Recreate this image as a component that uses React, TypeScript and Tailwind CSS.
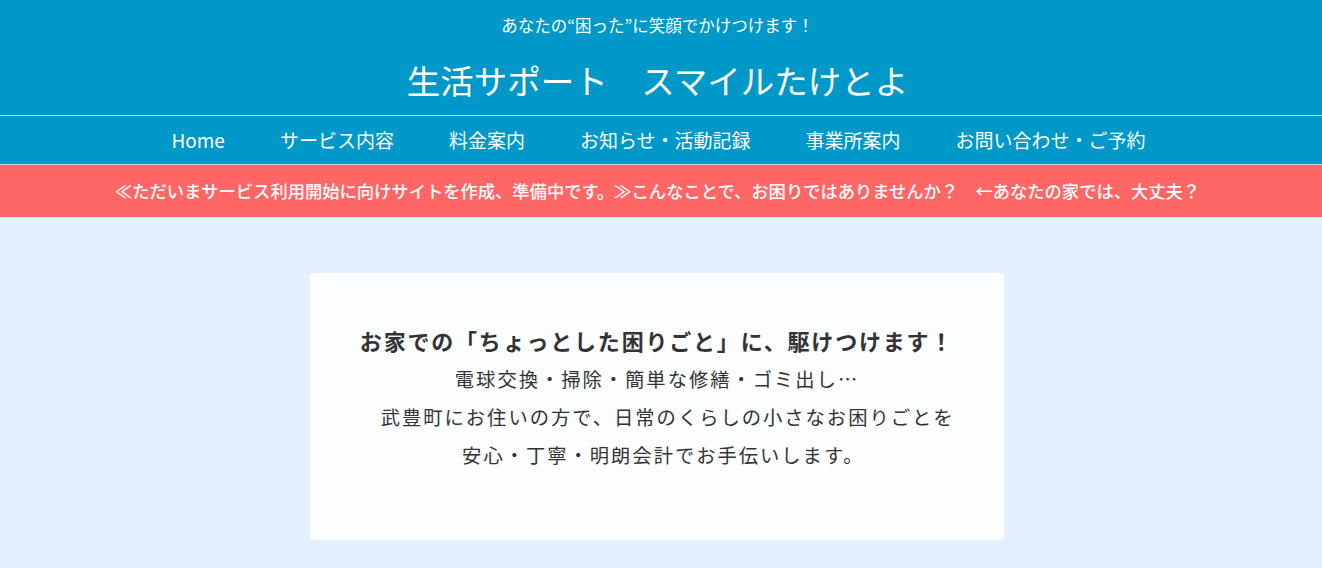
const navItems = ["Home", "サービス内容", "料金案内", "お知らせ・活動記録", "事業所案内", "お問い合わせ・ご予約"]

export default function App() {
  return (
    <div className="min-h-screen bg-[#e5f0fe] font-['Noto_Sans_CJK_JP','Noto_Sans',sans-serif] text-[#333]">
      {/* Header */}
      <header className="bg-[#0097c9] text-white">
        <div className="flex flex-col items-center border-b border-white/70 pt-[15px] pr-[7px] pb-[15px]">
          <p className="text-[16.5px] leading-[20px]">あなたの“困った”に笑顔でかけつけます！</p>
          <h1 className="mt-[25px] text-[33.5px] leading-[40px]">生活サポート　スマイルたけとよ</h1>
        </div>
        <nav className="flex h-[49px] items-center justify-center border-b border-[#c9d3d8] pr-[5px]">
          {navItems.map((item) => (
            <a key={item} href="#" className="px-[27.5px] text-[19px] leading-[28px]">
              {item}
            </a>
          ))}
        </nav>
      </header>

      {/* Notice */}
      <div className="flex h-[52px] items-center justify-center bg-[#ff6666] pr-[7px] text-[17.3px] font-medium text-white">
        ≪ただいまサービス利用開始に向けサイトを作成、準備中です。≫こんなことで、お困りではありませんか？　←あなたの家では、大丈夫？
      </div>

      {/* Main */}
      <main className="flex justify-center pt-[56px] pr-[8px] pb-[40px]">
        <div className="w-[694px] rounded-[4px] bg-[#fbfdff] pt-[47px] pb-[66px] text-center">
          <h2 className="text-[22px] leading-[40px] font-bold tracking-[1.8px]">
            お家での「ちょっとした困りごと」に、駆けつけます！
          </h2>
          <p className="text-[19.3px] leading-[38px] tracking-[2px]">
            電球交換・掃除・簡単な修繕・ゴミ出し…
            <br />
            {"\u3000武豊町にお住いの方で、日常のくらしの小さなお困りごとを"}
            <br />
            {"\u00a0\u00a0安心・丁寧・明朗会計でお手伝いします。"}
          </p>
        </div>
      </main>
    </div>
  )
}
